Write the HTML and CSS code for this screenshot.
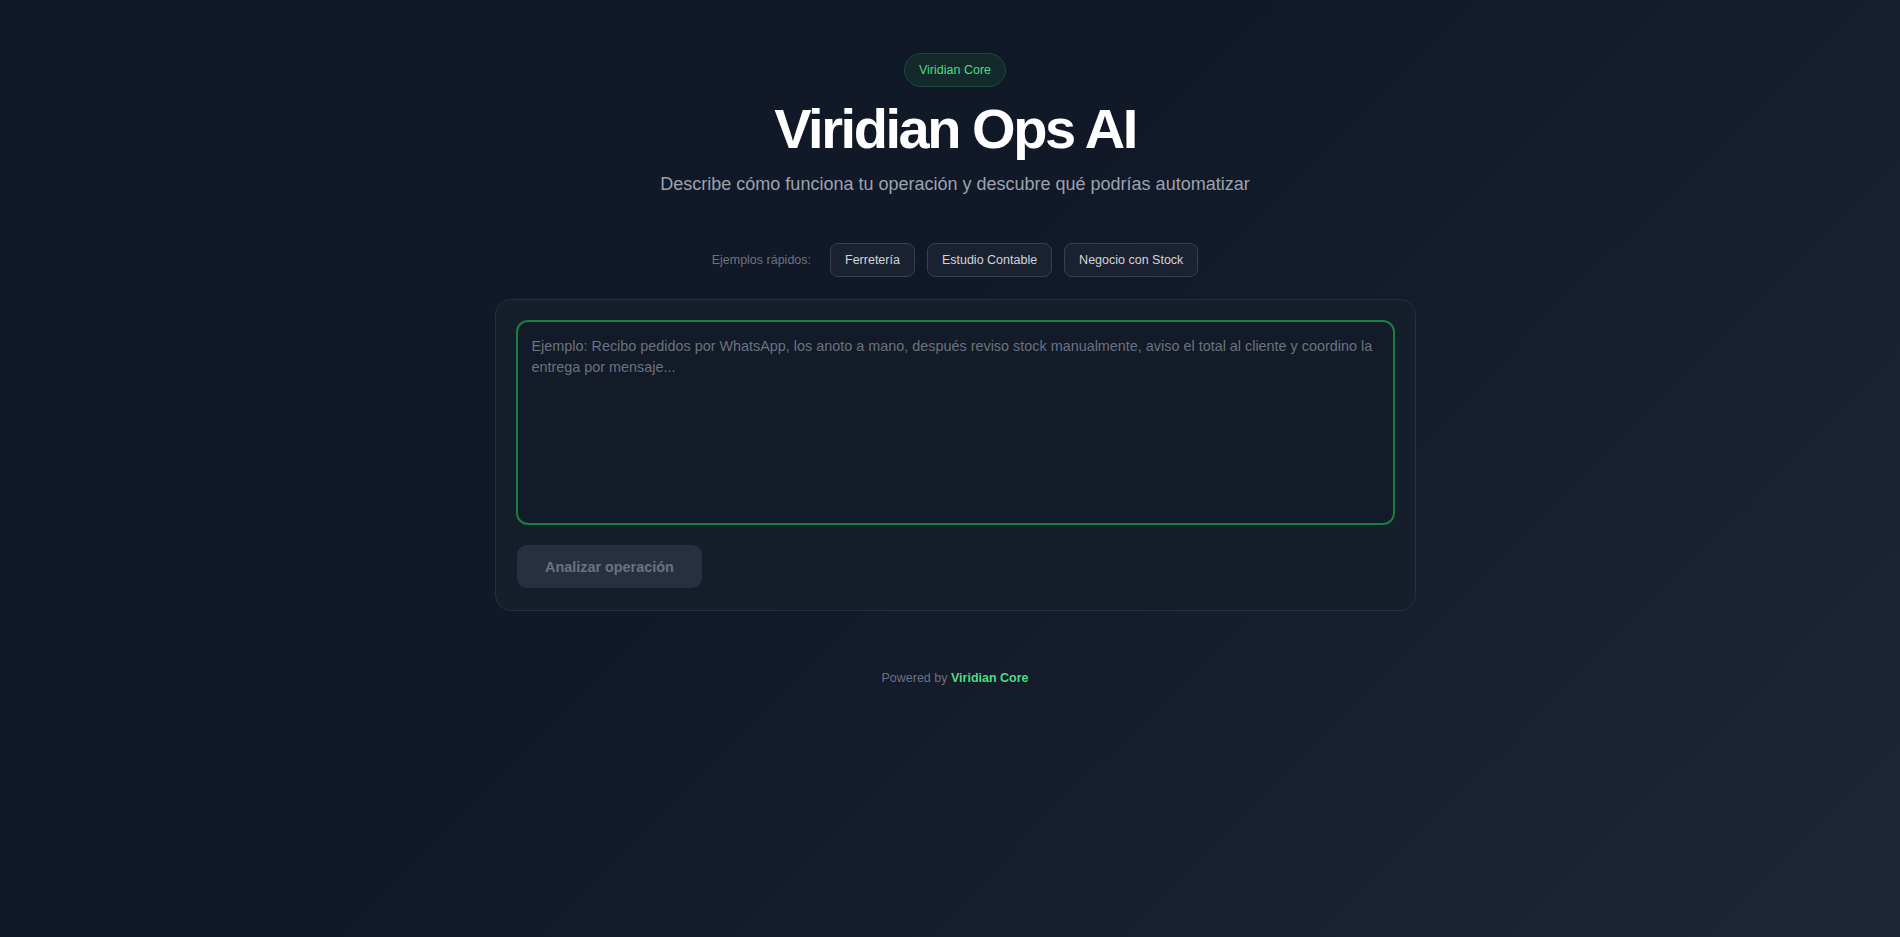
FILE: index.html
```html
<!DOCTYPE html>
<html lang="es">
<head>
<meta charset="utf-8">
<title>Viridian Ops AI</title>
<link rel="stylesheet" href="styles.css">
</head>
<body>
<main class="page">
  <header class="hero">
    <span class="badge">Viridian Core</span>
    <h1 class="title">Viridian Ops AI</h1>
    <p class="subtitle">Describe cómo funciona tu operación y descubre qué podrías automatizar</p>
  </header>

  <div class="examples">
    <span class="examples-label">Ejemplos rápidos:</span>
    <button class="chip" type="button">Ferretería</button>
    <button class="chip" type="button">Estudio Contable</button>
    <button class="chip" type="button">Negocio con Stock</button>
  </div>

  <section class="card">
    <textarea class="input" placeholder="Ejemplo: Recibo pedidos por WhatsApp, los anoto a mano, después reviso stock manualmente, aviso el total al cliente y coordino la entrega por mensaje..."></textarea>
    <div class="actions">
      <button class="analyze" type="button">Analizar operación</button>
    </div>
  </section>

  <footer class="footer">Powered by <strong class="brand">Viridian Core</strong></footer>
</main>
</body>
</html>
```
FILE: styles.css
```css
* { box-sizing: border-box; }

html, body {
  margin: 0;
  min-height: 100%;
}

body {
  min-height: 937px;
  background: linear-gradient(135deg, #111827 0%, #111827 45%, #1f2736 100%);
  font-family: "Liberation Sans", Arial, Helvetica, sans-serif;
  color: #f9fafb;
  padding-left: 10px;
}

.page {
  display: flex;
  flex-direction: column;
  align-items: center;
  padding-top: 53px;
}

.hero {
  display: flex;
  flex-direction: column;
  align-items: center;
}

.badge {
  display: inline-block;
  font-size: 12.5px;
  line-height: 16px;
  padding: 8px 14px;
  border: 1px solid #164c37;
  background: #13292c;
  color: #4ade80;
  border-radius: 999px;
}

.title {
  margin: 14px 0 0;
  font-size: 56px;
  line-height: 56px;
  font-weight: 700;
  letter-spacing: -2.45px;
  color: #ffffff;
}

.subtitle {
  margin: 13px 0 0;
  font-size: 18px;
  line-height: 28px;
  color: #9ca3af;
}

.examples {
  margin-top: 44.5px;
  display: flex;
  align-items: center;
  gap: 12px;
}

.examples-label {
  font-size: 12.5px;
  color: #6b7280;
  margin-right: 7px;
}

.chip {
  font-family: inherit;
  font-size: 12.5px;
  line-height: 16.5px;
  padding: 8px 14px;
  border: 1px solid #374151;
  background: #1a2130;
  color: #d1d5db;
  border-radius: 8px;
  cursor: pointer;
}

.card {
  margin-top: 21.5px;
  width: 921px;
  padding: 20px 20px 22px;
  border: 1px solid #263041;
  border-radius: 16px;
  background: #161d2b;
  display: flex;
  flex-direction: column;
}

.input {
  display: block;
  width: 100%;
  height: 205.5px;
  resize: none;
  padding: 14px;
  border: 2px solid #16803f;
  border-radius: 12px;
  background: #131a28;
  color: #e5e7eb;
  font-family: inherit;
  font-size: 14.4px;
  line-height: 21.6px;
  outline: none;
}

.input::placeholder {
  color: #6b7280;
  opacity: 1;
}

.actions {
  margin-top: 20px;
  display: flex;
  padding-left: 1.5px;
}

.analyze {
  font-family: inherit;
  font-size: 14.4px;
  font-weight: 700;
  line-height: 20px;
  padding: 11.5px 28px;
  border: none;
  border-radius: 10px;
  background: #263041;
  color: #6b7280;
  cursor: not-allowed;
}

.footer {
  margin-top: 58px;
  font-size: 12.5px;
  line-height: 18px;
  color: #6b7280;
}

.brand {
  color: #4ade80;
  font-weight: 700;
}
```
